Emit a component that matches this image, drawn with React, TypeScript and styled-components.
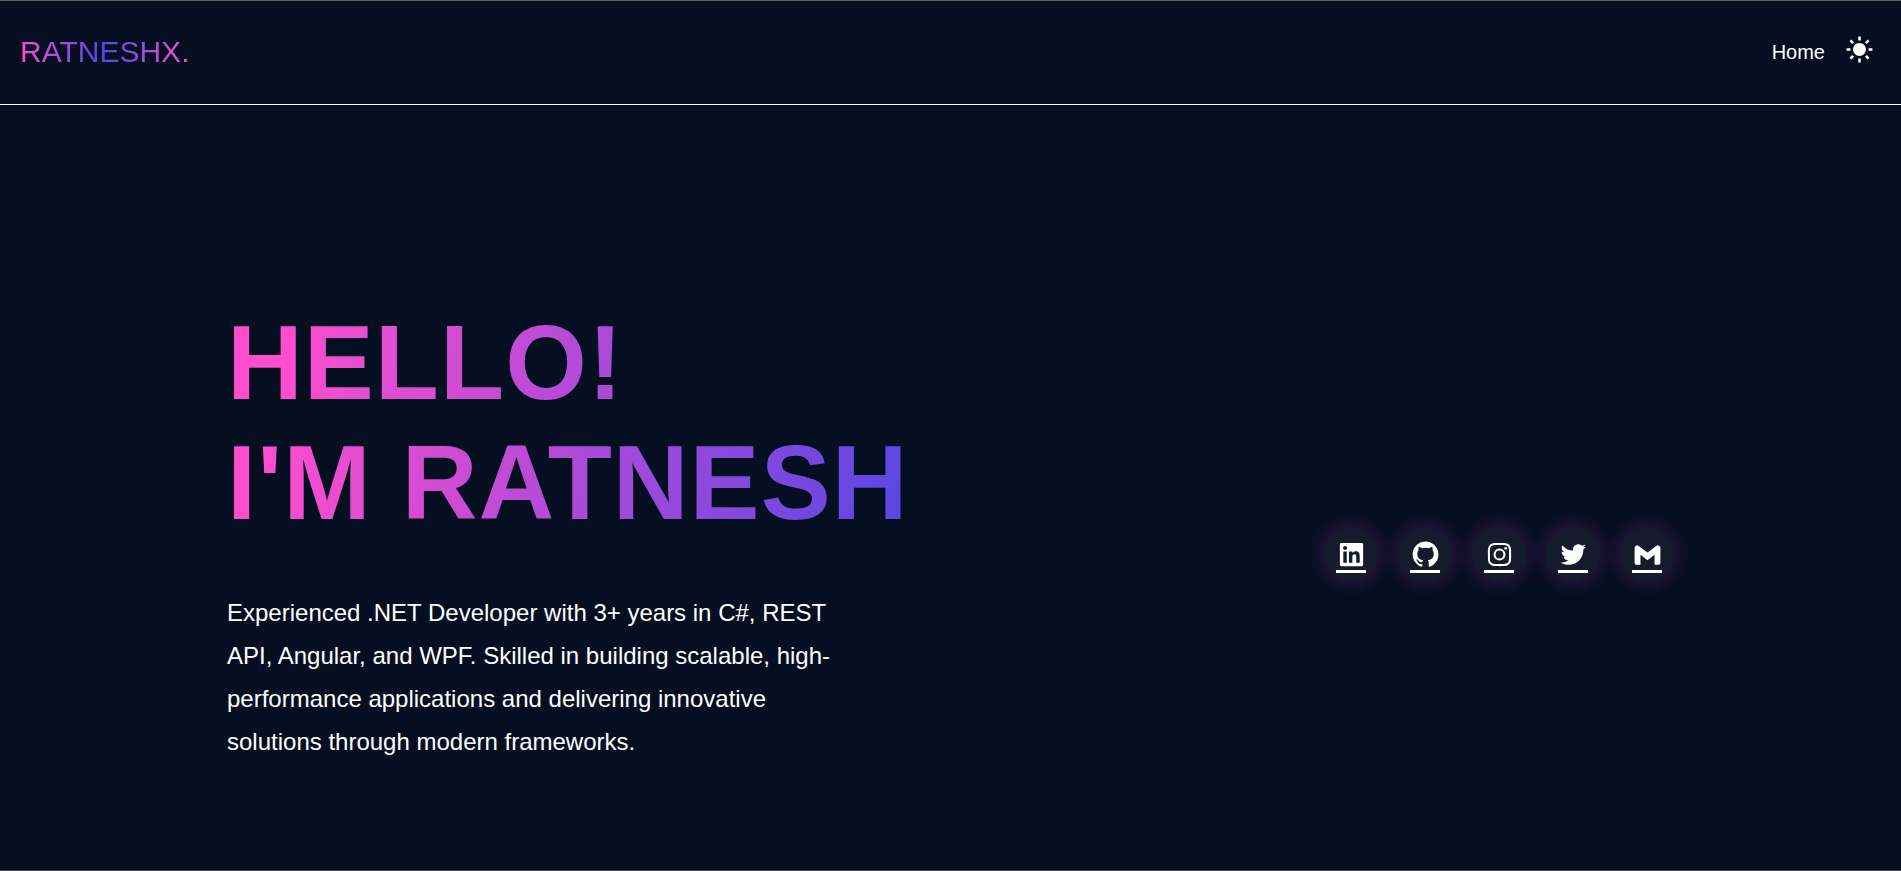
import React from "react";
import styled, { createGlobalStyle } from "styled-components";
import {
  BiLogoLinkedinSquare,
  BiLogoGithub,
  BiLogoInstagram,
  BiLogoTwitter,
  BiLogoGmail,
  BiSolidSun,
} from "react-icons/bi";

const GlobalStyle = createGlobalStyle`
  * { box-sizing: border-box; margin: 0; padding: 0; }
  body {
    background: #060f21;
    color: #fff;
    font-family: "Liberation Sans", Arial, sans-serif;
  }
`;

const Page = styled.div`
  min-height: 100vh;
  display: flex;
  flex-direction: column;
  border-top: 1px solid #5c5c5c;
  border-bottom: 1px solid #4b464b;
`;

const Header = styled.header`
  display: flex;
  align-items: center;
  justify-content: space-between;
  height: 104px;
  padding: 0 26px 2px 20px;
  border-bottom: 1px solid #fff;
`;

const Logo = styled.a`
  font-size: 30px;
  line-height: 40px;
  text-decoration: none;
  color: transparent;
  background: linear-gradient(90deg, #ff4ecd, #4b49e8, #ff4ecd);
  background-clip: text;
`;

const Nav = styled.nav`
  display: flex;
  align-items: center;
  gap: 19px;
`;

const NavLink = styled.a`
  font-size: 20px;
  line-height: 24px;
  color: #fff;
  text-decoration: none;
`;

const ThemeButton = styled.button`
  display: flex;
  padding: 0 0 4px;
  border: 0;
  background: none;
  color: #fff;
  font-size: 31px;
  cursor: pointer;
`;

const Hero = styled.main`
  flex: 1;
  display: grid;
  grid-template-columns: 1fr auto;
  align-content: start;
  align-items: center;
  padding: 198px 227px 0;
`;

const Title = styled.h1`
  width: max-content;
  font-size: 105px;
  line-height: 120px;
  letter-spacing: 1px;
  color: transparent;
  background: linear-gradient(100deg, #ff4ecd 8%, #4f46e5 105%);
  background-clip: text;
`;

const Summary = styled.p`
  max-width: 640px;
  margin: 48px 0 42px;
  font-size: 24px;
  line-height: 43px;
`;

const Socials = styled.ul`
  display: flex;
  gap: 20px;
  list-style: none;
`;

const SocialLink = styled.a`
  display: flex;
  flex-direction: column;
  align-items: center;
  justify-content: center;
  width: 54px;
  height: 54px;
  padding-top: 4px;
  border-radius: 50%;
  background: #151b2d;
  box-shadow: 0 0 20px rgba(190, 40, 180, 0.32);
  color: #fff;
  font-size: 31px;

  &::after {
    content: "";
    width: 30px;
    height: 3px;
    background: currentColor;
  }
`;

const socials = [
  { name: "LinkedIn", Icon: BiLogoLinkedinSquare },
  { name: "GitHub", Icon: BiLogoGithub },
  { name: "Instagram", Icon: BiLogoInstagram },
  { name: "Twitter", Icon: BiLogoTwitter },
  { name: "Gmail", Icon: BiLogoGmail },
];

export default function App() {
  return (
    <>
      <GlobalStyle />
      <Page>
        <Header>
          <Logo href="#">RATNESHX.</Logo>
          <Nav>
            <NavLink href="#home">Home</NavLink>
            <ThemeButton type="button" aria-label="Toggle theme">
              <BiSolidSun />
            </ThemeButton>
          </Nav>
        </Header>
        <Hero id="home">
          <section>
            <Title>
              HELLO!
              <br />
              I'M RATNESH
            </Title>
            <Summary>
              Experienced .NET Developer with 3+ years in C#, REST API, Angular,
              and WPF. Skilled in building scalable, high-performance
              applications and delivering innovative solutions through modern
              frameworks.
            </Summary>
          </section>
          <Socials>
            {socials.map(({ name, Icon }) => (
              <li key={name}>
                <SocialLink href="#" aria-label={name}>
                  <Icon />
                </SocialLink>
              </li>
            ))}
          </Socials>
        </Hero>
      </Page>
    </>
  );
}
